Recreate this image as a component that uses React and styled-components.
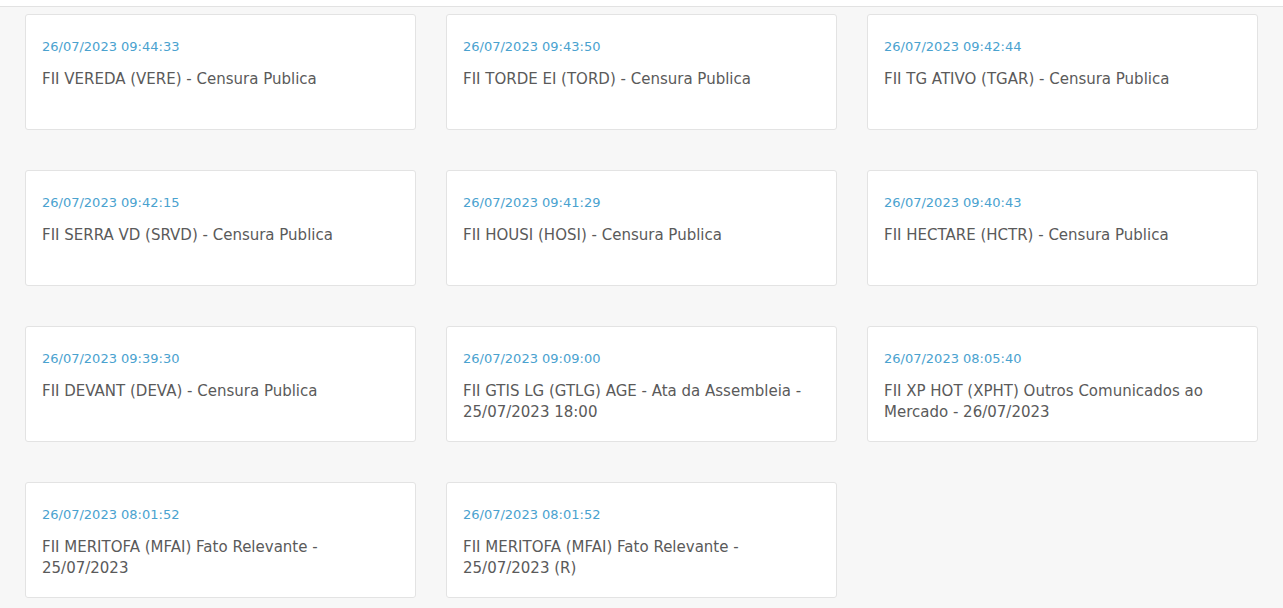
import styled, { createGlobalStyle } from "styled-components";

const GlobalStyle = createGlobalStyle`
  html, body {
    margin: 0;
    padding: 0;
    background: #f7f7f7;
    font-family: "DejaVu Sans", "Open Sans", sans-serif;
  }
`;

const items = [
  { date: "26/07/2023 09:44:33", title: "FII VEREDA (VERE) - Censura Publica" },
  { date: "26/07/2023 09:43:50", title: "FII TORDE EI (TORD) - Censura Publica" },
  { date: "26/07/2023 09:42:44", title: "FII TG ATIVO (TGAR) - Censura Publica" },
  { date: "26/07/2023 09:42:15", title: "FII SERRA VD (SRVD) - Censura Publica" },
  { date: "26/07/2023 09:41:29", title: "FII HOUSI (HOSI) - Censura Publica" },
  { date: "26/07/2023 09:40:43", title: "FII HECTARE (HCTR) - Censura Publica" },
  { date: "26/07/2023 09:39:30", title: "FII DEVANT (DEVA) - Censura Publica" },
  { date: "26/07/2023 09:09:00", title: "FII GTIS LG (GTLG) AGE - Ata da Assembleia - 25/07/2023 18:00" },
  { date: "26/07/2023 08:05:40", title: "FII XP HOT (XPHT) Outros Comunicados ao Mercado - 26/07/2023" },
  { date: "26/07/2023 08:01:52", title: "FII MERITOFA (MFAI) Fato Relevante - 25/07/2023" },
  { date: "26/07/2023 08:01:52", title: "FII MERITOFA (MFAI) Fato Relevante - 25/07/2023 (R)" },
];

export default function App() {
  return (
    <>
      <GlobalStyle />
      <TopBar />
      <Grid>
        {items.map((item, i) => (
          <Card key={i}>
            <DateText>{item.date}</DateText>
            <Title>{item.title}</Title>
          </Card>
        ))}
      </Grid>
    </>
  );
}

const TopBar = styled.div`
  height: 6px;
  background: #ffffff;
  border-bottom: 1px solid #e2e2e2;
`;

const Grid = styled.div`
  display: grid;
  grid-template-columns: repeat(3, 391px);
  column-gap: 30px;
  row-gap: 40px;
  padding: 7px 25px 0 25px;
`;

const Card = styled.div`
  box-sizing: border-box;
  height: 116px;
  background: #ffffff;
  border: 1px solid #e3e3e3;
  border-radius: 3px;
  padding: 23px 16px 0 16px;
`;

const DateText = styled.div`
  color: #4aa2cf;
  font-size: 13px;
  line-height: 18px;
`;

const Title = styled.div`
  margin-top: 13px;
  color: #5a5a5a;
  font-size: 15px;
  line-height: 21px;
`;
